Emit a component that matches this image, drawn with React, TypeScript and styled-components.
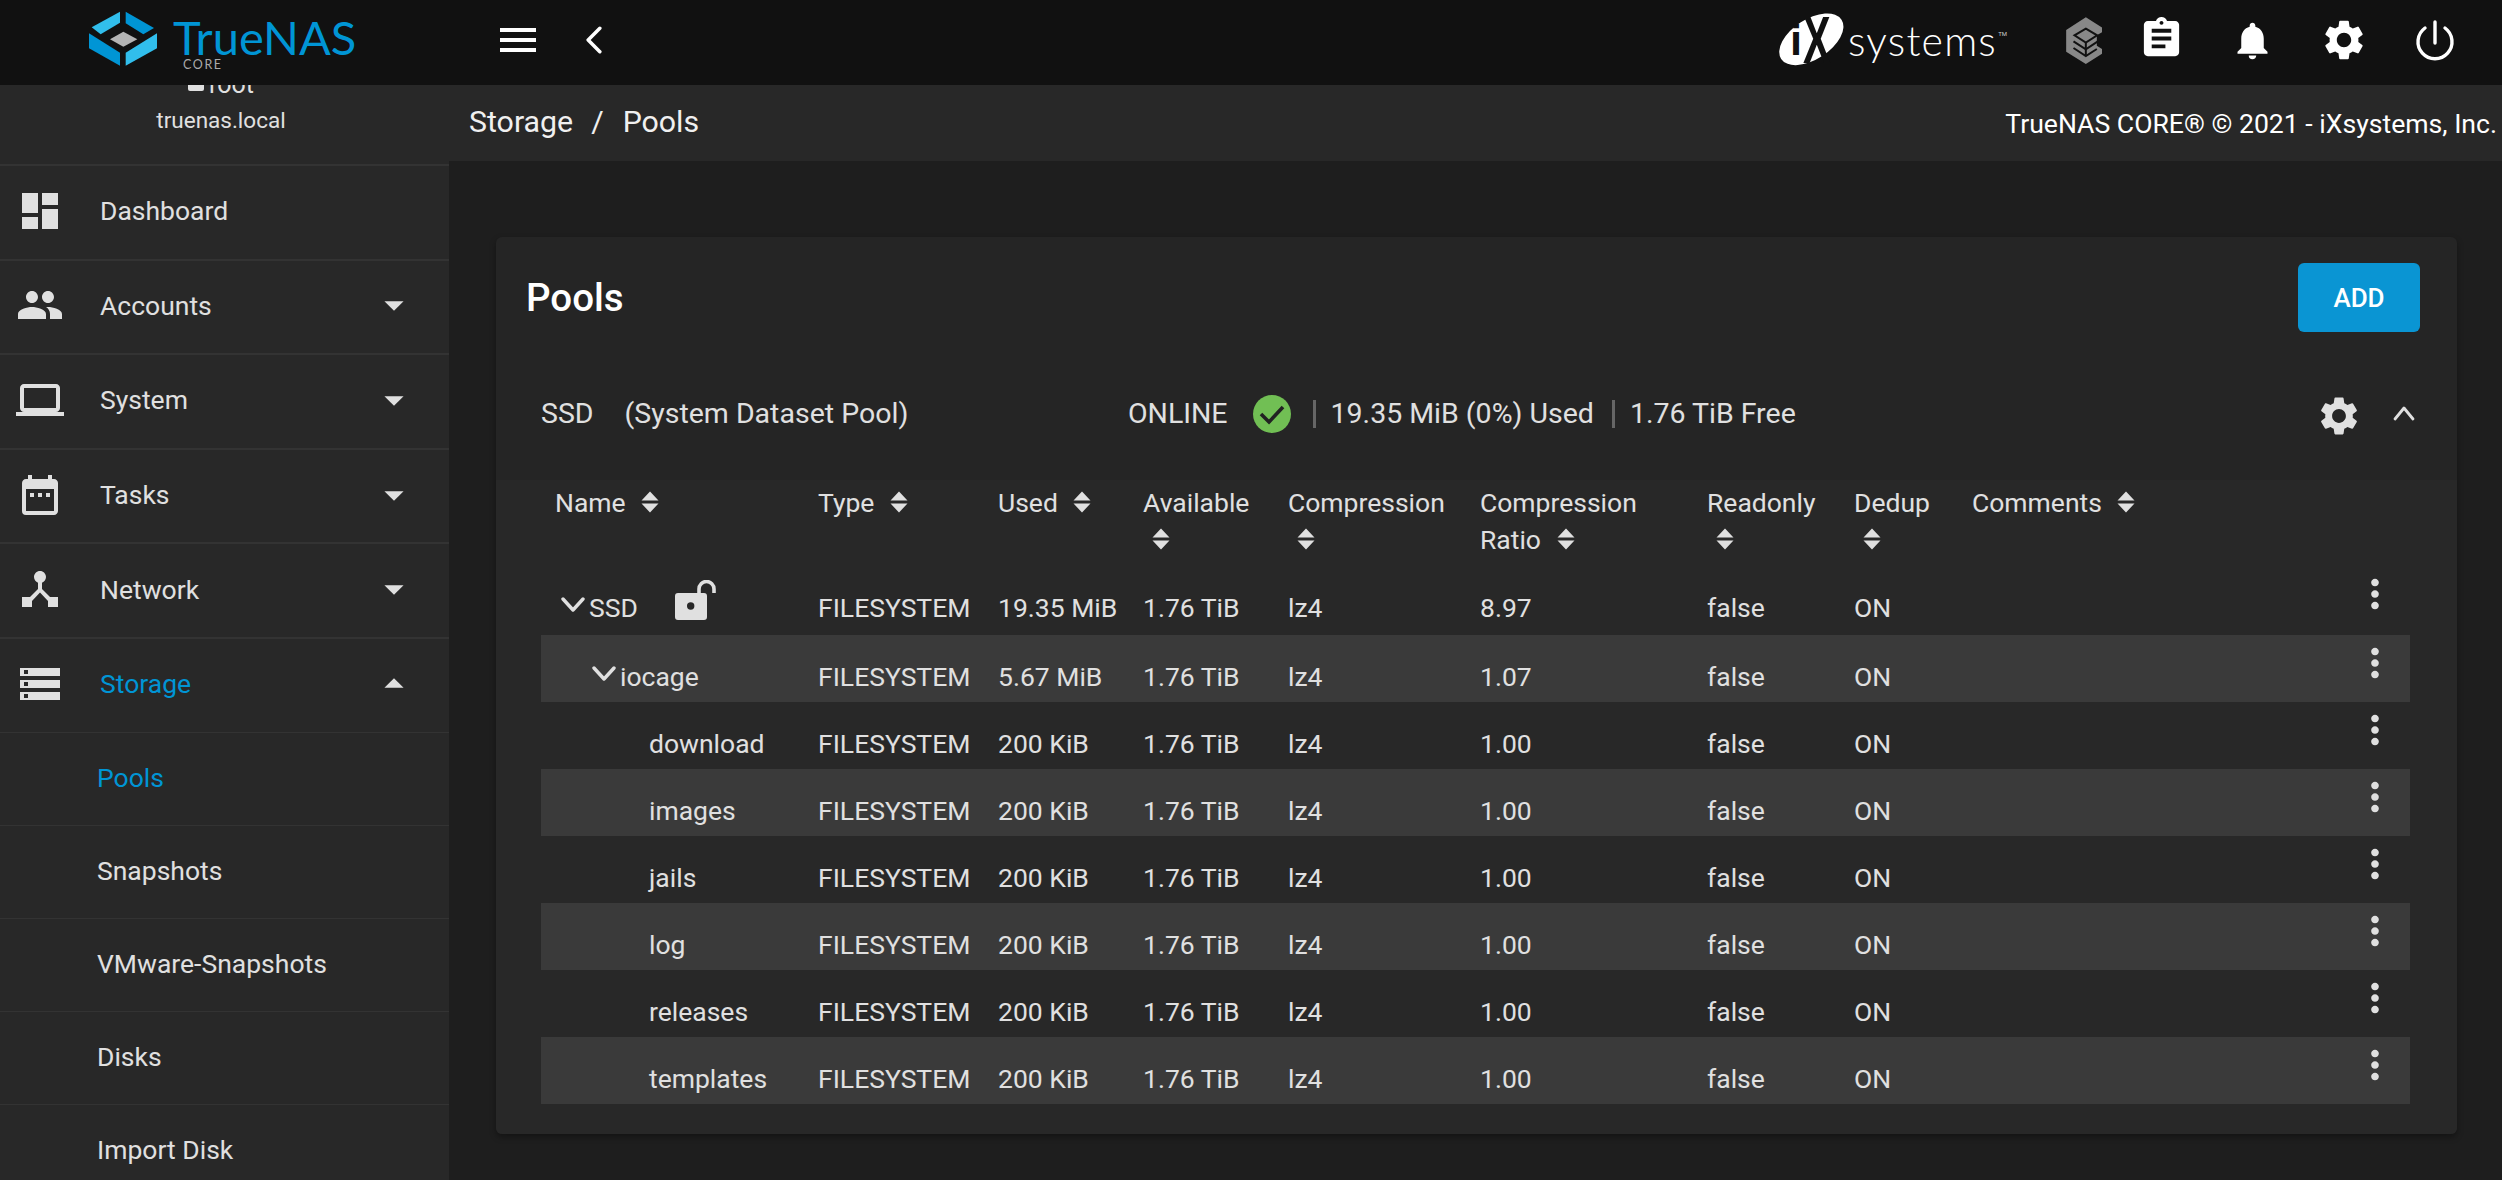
import React from "react";
import styled, { createGlobalStyle } from "styled-components";
import {
  MdAssignment,
  MdArrowDropDown,
  MdArrowDropUp,
  MdDashboard,
  MdDateRange,
  MdDeviceHub,
  MdLaptop,
  MdMenu,
  MdMoreVert,
  MdNotifications,
  MdPeople,
  MdSettings,
  MdStorage,
} from "react-icons/md";

const navItems = [
  { label: "Dashboard", icon: <MdDashboard size={48} /> },
  { label: "Accounts", icon: <MdPeople size={48} />, arrow: "down" },
  { label: "System", icon: <MdLaptop size={48} />, arrow: "down" },
  { label: "Tasks", icon: <MdDateRange size={48} />, arrow: "down" },
  { label: "Network", icon: <MdDeviceHub size={48} />, arrow: "down" },
  { label: "Storage", icon: <MdStorage size={48} />, arrow: "up", active: true },
];

const subItems = ["Pools", "Snapshots", "VMware-Snapshots", "Disks", "Import Disk"];

const columns = ["Name", "Type", "Used", "Available", "Compression", "Compression Ratio", "Readonly", "Dedup", "Comments"];

const datasets = [
  { name: "SSD", level: 0, used: "19.35 MiB", ratio: "8.97" },
  { name: "iocage", level: 1, used: "5.67 MiB", ratio: "1.07" },
  { name: "download", level: 2, used: "200 KiB", ratio: "1.00" },
  { name: "images", level: 2, used: "200 KiB", ratio: "1.00" },
  { name: "jails", level: 2, used: "200 KiB", ratio: "1.00" },
  { name: "log", level: 2, used: "200 KiB", ratio: "1.00" },
  { name: "releases", level: 2, used: "200 KiB", ratio: "1.00" },
  { name: "templates", level: 2, used: "200 KiB", ratio: "1.00" },
];

const TrueNasMark = () => (
  <MarkSvg width="68" height="55" viewBox="87 33 204 165">
    <polygon points="95,82 180,35 180,68 122,103" fill="#31beec" />
    <polygon points="197,35 282,84 250,103 197,70" fill="#0095d5" />
    <polygon points="87,100 180,158 180,197 87,145" fill="#0095d5" />
    <polygon points="291,100 197,158 197,197 291,145" fill="#31beec" />
    <polygon points="150,118 190,95 232,118 190,140" fill="#b4b4b4" />
  </MarkSvg>
);

const IxMark = () => (
  <IxSvg width="90" height="60" viewBox="0 0 270 180">
    <ellipse cx="118" cy="88" rx="108" ry="60" transform="rotate(-33 118 88)" fill="#fff" />
    <text x="54" y="135" fontFamily="Liberation Sans" fontWeight="700" fontSize="130" fill="#111">i</text>
    <text x="150" y="160" fontFamily="Liberation Sans" fontWeight="700" fontSize="200" fill="#111" transform="scale(.62 1)">X</text>
  </IxSvg>
);

const TrueCommandIcon = () => (
  <svg width="47" height="60" viewBox="0 0 140 180">
    <polygon points="92,22 152,60 125,76 125,107 152,124 92,162 33,125 33,60" fill="#888" />
    <g fill="none" stroke="#111" strokeWidth="6">
      <polygon points="92,56 126,76 92,98 58,76" />
      <polyline points="55,94 92,118 128,94" />
      <polyline points="55,114 92,138 125,117" />
      <line x1="92" y1="98" x2="92" y2="138" />
    </g>
    <polygon points="92,70 104,77 92,84 80,77" fill="#888" />
  </svg>
);

const PowerIcon = () => (
  <svg width="42" height="42" viewBox="0 0 42 42" fill="none" stroke="#fff" strokeWidth="3.4" strokeLinecap="round">
    <path d="M21 3v21" />
    <path d="M11 9a17 17 0 1 0 20 0" />
  </svg>
);

const Chevron = ({ size, dir, weight = 3.4 }: { size: number; dir: "up" | "down" | "left"; weight?: number }) => (
  <svg width={size} height={size} viewBox="0 0 24 24" fill="none" stroke="currentColor" strokeWidth={weight} strokeLinecap="round" strokeLinejoin="round">
    {dir === "down" && <polyline points="2,6 12,17 22,6" />}
    {dir === "up" && <polyline points="3,17 12,6 21,17" />}
    {dir === "left" && <polyline points="17,2 7,12 17,22" />}
  </svg>
);

const SortIcon = () => (
  <SortSvg width="18" height="22" viewBox="0 0 18 22">
    <path d="M9 0.5 17.5 9.5H0.5Z" />
    <path d="M9 21.5 17.5 12.5H0.5Z" />
  </SortSvg>
);

const LockIcon = () => (
  <LockSvg width="42" height="40" viewBox="0 0 42 40">
    <path fillRule="evenodd" fill="#e0e0e0" d="M3 13h26a3 3 0 0 1 3 3v21a3 3 0 0 1-3 3H3a3 3 0 0 1-3-3V16a3 3 0 0 1 3-3z M15.7 22.3a3.7 3.7 0 1 0 0 7.4 3.7 3.7 0 0 0 0-7.4z" />
    <path d="M24 13V9a7.5 7.5 0 0 1 15 0v4" fill="none" stroke="#e0e0e0" strokeWidth="3.6" />
  </LockSvg>
);

const StatusIcon = () => (
  <svg width="38" height="38" viewBox="0 0 38 38">
    <circle cx="19" cy="19" r="19" fill="#71bf54" />
    <polyline points="8,19 16,27 30,12" fill="none" stroke="#222" strokeWidth="3.6" />
  </svg>
);

export default function App() {
  return (
    <Page>
      <GlobalStyle />
      <TopBar>
        <Brand>
          <TrueNasMark />
          <Wordmark>
            <BrandName>TrueNAS</BrandName>
            <BrandSub>CORE</BrandSub>
          </Wordmark>
        </Brand>
        <TopIcon $width={48}>
          <MdMenu size={48} />
        </TopIcon>
        <BackButton>
          <Chevron size={28} dir="left" weight={3} />
        </BackButton>
        <TopRight>
          <IxLogo>
            <IxMark />
            <IxName>systems</IxName>
            <IxTrademark>TM</IxTrademark>
          </IxLogo>
          <TopIcon $width={75}>
            <TrueCommandIcon />
          </TopIcon>
          <TopIcon $width={91} $lift={4}>
            <MdAssignment size={47} />
          </TopIcon>
          <TopIcon $width={91}>
            <MdNotifications size={45} />
          </TopIcon>
          <TopIcon $width={91}>
            <MdSettings size={48} />
          </TopIcon>
          <TopIcon $width={91}>
            <PowerIcon />
          </TopIcon>
        </TopRight>
      </TopBar>

      <Body>
        <Sidebar>
          <Profile>
            <ProfileUser>
              <ProfileBadge />
              root
            </ProfileUser>
            <ProfileHost>truenas.local</ProfileHost>
          </Profile>
          {navItems.map((item) => (
            <NavRow key={item.label}>
              <NavIcon>{item.icon}</NavIcon>
              <NavLabel $active={item.active}>{item.label}</NavLabel>
              {item.arrow === "down" && <MdArrowDropDown size={46} />}
              {item.arrow === "up" && <MdArrowDropUp size={46} />}
            </NavRow>
          ))}
          {subItems.map((label, i) => (
            <SubRow key={label} $active={i === 0}>
              {label}
            </SubRow>
          ))}
        </Sidebar>

        <Main>
          <PageHeader>
            <Crumbs>
              <span>Storage</span>
              <CrumbSlash>/</CrumbSlash>
              <span>Pools</span>
            </Crumbs>
            <Copyright>TrueNAS CORE® © 2021 - iXsystems, Inc.</Copyright>
          </PageHeader>

          <Card>
            <CardHead>
              <CardTitle>Pools</CardTitle>
              <AddButton>ADD</AddButton>
            </CardHead>

            <PoolHead>
              <PoolName>
                <span>SSD</span>
                <span>(System Dataset Pool)</span>
              </PoolName>
              <PoolStatus>
                ONLINE
                <StatusIcon />
              </PoolStatus>
              <PoolStat $gap={22}>19.35 MiB (0%) Used</PoolStat>
              <PoolStat $gap={18}>1.76 TiB Free</PoolStat>
              <PoolActions>
                <PoolGear size={46} />
                <Chevron size={24} dir="up" weight={2.8} />
              </PoolActions>
            </PoolHead>

            <Table>
              <HeadRow>
                {columns.map((col) => (
                  <HeadCell key={col}>
                    {col} <SortIcon />
                  </HeadCell>
                ))}
              </HeadRow>
              {datasets.map((row, i) => (
                <Row key={row.name} $striped={i % 2 === 1} $first={i === 0}>
                  <NameCell $level={row.level}>
                    {row.level < 2 && (
                      <Expander>
                        <Chevron size={24} dir="down" />
                      </Expander>
                    )}
                    {row.name}
                    {row.level === 0 && <LockIcon />}
                  </NameCell>
                  <Cell>FILESYSTEM</Cell>
                  <Cell>{row.used}</Cell>
                  <Cell>1.76 TiB</Cell>
                  <Cell>lz4</Cell>
                  <Cell>{row.ratio}</Cell>
                  <Cell>false</Cell>
                  <Cell>ON</Cell>
                  <Cell />
                  <RowMenu>
                    <MdMoreVert size={46} />
                  </RowMenu>
                </Row>
              ))}
            </Table>
          </Card>
        </Main>
      </Body>
    </Page>
  );
}

const GlobalStyle = createGlobalStyle`
  html, body {
    margin: 0;
    padding: 0;
    background: #1e1e1e;
    overflow: hidden;
  }
  * {
    box-sizing: border-box;
  }
`;

const Page = styled.div`
  width: 2502px;
  height: 1180px;
  display: flex;
  flex-direction: column;
  overflow: hidden;
  font-family: Roboto, "Liberation Sans", sans-serif;
  font-size: 26.5px;
  color: #e0e0e0;
`;

const TopBar = styled.header`
  flex: 0 0 85px;
  padding-bottom: 5px;
  display: flex;
  align-items: center;
  background: #111;
  color: #fff;
`;

const Brand = styled.div`
  width: 494px;
  padding-left: 89px;
  display: flex;
  align-items: center;
  gap: 16px;
`;

const MarkSvg = styled.svg`
  margin-bottom: 3px;
`;

const Wordmark = styled.div`
  display: flex;
  flex-direction: column;
`;

const BrandName = styled.div`
  font-family: Lato, sans-serif;
  font-size: 47px;
  line-height: 44px;
  margin-top: 5px;
  color: #0095d5;
`;

const BrandSub = styled.div`
  margin: -1px 0 0 10px;
  font-family: Lato, sans-serif;
  font-size: 12.5px;
  line-height: 13px;
  letter-spacing: 1.6px;
  color: #aaa;
`;

const TopIcon = styled.div<{ $width: number; $lift?: number }>`
  width: ${(p) => p.$width}px;
  margin-bottom: ${(p) => p.$lift ?? 0}px;
  display: flex;
  justify-content: center;
  align-items: center;
`;

const BackButton = styled.div`
  margin-left: 38px;
  display: flex;
`;

const TopRight = styled.div`
  margin-left: auto;
  padding-right: 22px;
  display: flex;
  align-items: center;
`;

const IxLogo = styled.div`
  display: flex;
  align-items: center;
  margin-right: 44px;
  position: relative;
`;

const IxSvg = styled.svg`
  overflow: visible;
`;

const IxName = styled.span`
  margin: 1px 0 0 -14px;
  font-family: Lato, sans-serif;
  font-weight: 300;
  font-size: 41px;
  letter-spacing: 1.2px;
  line-height: 50px;
`;

const IxTrademark = styled.span`
  position: absolute;
  top: 20px;
  right: -10px;
  font-size: 6px;
  color: #ccc;
`;

const Body = styled.div`
  flex: 1;
  display: flex;
  min-height: 0;
`;

const Sidebar = styled.aside`
  flex: 0 0 449px;
  background: #282828;
  overflow: hidden;
`;

const Profile = styled.div`
  margin-top: -15px;
  height: 94px;
  padding-right: 7px;
  display: flex;
  flex-direction: column;
  align-items: center;
  font-size: 22.5px;
  line-height: 30px;
`;

const ProfileUser = styled.div`
  display: flex;
  align-items: center;
  gap: 5px;
  font-size: 25px;
  color: #e0e0e0;
`;

const ProfileBadge = styled.span`
  width: 16px;
  height: 16px;
  margin-bottom: 4px;
  border-radius: 2px;
  background: #e0e0e0;
`;

const ProfileHost = styled.div`
  margin-top: 5px;
`;

const NavRow = styled.div`
  height: 94.6px;
  padding: 0 32px 3px 16px;
  display: flex;
  align-items: center;
  border-top: 2.5px solid #333;
  color: #e0e0e0;
`;

const NavIcon = styled.div`
  width: 48px;
  margin-right: 36px;
  display: flex;
`;

const NavLabel = styled.span<{ $active?: boolean }>`
  flex: 1;
  color: ${(p) => (p.$active ? "#0095d5" : "#e0e0e0")};
`;

const SubRow = styled.div<{ $active?: boolean }>`
  height: 93px;
  padding: 0 0 3px 97px;
  display: flex;
  align-items: center;
  border-top: 1.5px solid #333;
  color: ${(p) => (p.$active ? "#0095d5" : "#e0e0e0")};
`;

const Main = styled.main`
  flex: 1;
  min-width: 0;
  background: #1e1e1e;
`;

const PageHeader = styled.div`
  height: 76px;
  padding: 0 5px 0 20px;
  display: flex;
  align-items: center;
  justify-content: space-between;
  background: #282828;
  color: #fff;
`;

const Crumbs = styled.div`
  margin-bottom: 3px;
  display: flex;
  align-items: center;
  font-size: 30.3px;
  color: #f0f0f0;
`;

const CrumbSlash = styled.span`
  margin: 0 19px 0 18px;
`;

const Copyright = styled.div`
  font-size: 26.6px;
`;

const Card = styled.section`
  margin: 76px 45px 0 47px;
  border-radius: 6px;
  background: #252525;
  overflow: hidden;
  box-shadow: 0 3px 6px rgba(0, 0, 0, 0.35);
`;

const CardHead = styled.div`
  height: 118px;
  padding: 26px 37px 0 30px;
  display: flex;
  align-items: flex-start;
  justify-content: space-between;
`;

const CardTitle = styled.h2`
  margin: 12px 0 0;
  font-size: 38.5px;
  line-height: 46px;
  font-weight: 500;
  color: #fff;
`;

const AddButton = styled.button`
  width: 122px;
  height: 69px;
  border: none;
  border-radius: 6px;
  background: #0a95d3;
  color: #fff;
  font-family: inherit;
  font-size: 26px;
  font-weight: 500;
`;

const PoolHead = styled.div`
  height: 125px;
  padding: 0 41px 8px 45px;
  display: flex;
  align-items: center;
  font-size: 28.5px;
`;

const PoolName = styled.div`
  width: 587px;
  display: flex;
  gap: 31px;
`;

const PoolStatus = styled.div`
  display: flex;
  align-items: center;
  gap: 25px;
`;

const PoolStat = styled.div<{ $gap: number }>`
  margin-left: ${(p) => p.$gap}px;
  padding-left: 15px;
  border-left: 3px solid #666;
  line-height: 28px;
`;

const PoolActions = styled.div`
  margin-left: auto;
  display: flex;
  align-items: center;
  gap: 30px;
`;

const PoolGear = styled(MdSettings)`
  margin-top: 5px;
`;

const Table = styled.div`
  padding: 0 47px 30px 45px;
  background: #282828;
`;

const HeadRow = styled.div`
  height: 86px;
  padding: 4px 0 0 14px;
  display: grid;
  grid-template-columns: 263px 180px 145px 145px 192px 227px 147px 118px 1fr 70px;
  line-height: 37px;
`;

const HeadCell = styled.div`
  padding-right: 20px;
`;

const SortSvg = styled.svg`
  margin-left: 9px;
  vertical-align: -1px;
  fill: #e0e0e0;
`;

const Row = styled.div<{ $striped: boolean; $first: boolean }>`
  height: ${(p) => (p.$first ? 69 : 67)}px;
  padding-left: 14px;
  display: grid;
  grid-template-columns: 263px 180px 145px 145px 192px 227px 147px 118px 1fr 70px;
  background: ${(p) => (p.$striped ? "#3a3a3a" : "transparent")};
`;

const Cell = styled.div`
  padding-top: 27px;
  line-height: 30px;
  white-space: nowrap;
`;

const NameCell = styled(Cell)<{ $level: number }>`
  padding-left: ${(p) => (p.$level === 2 ? 94 : 6 + p.$level * 31)}px;
  display: flex;
  align-items: flex-start;
`;

const Expander = styled.span`
  margin-right: 4px;
  display: flex;
`;

const LockSvg = styled.svg`
  margin: -13px 0 0 37px;
`;

const RowMenu = styled.div`
  padding-top: 5px;
  display: flex;
  justify-content: center;
  align-items: flex-start;
`;
